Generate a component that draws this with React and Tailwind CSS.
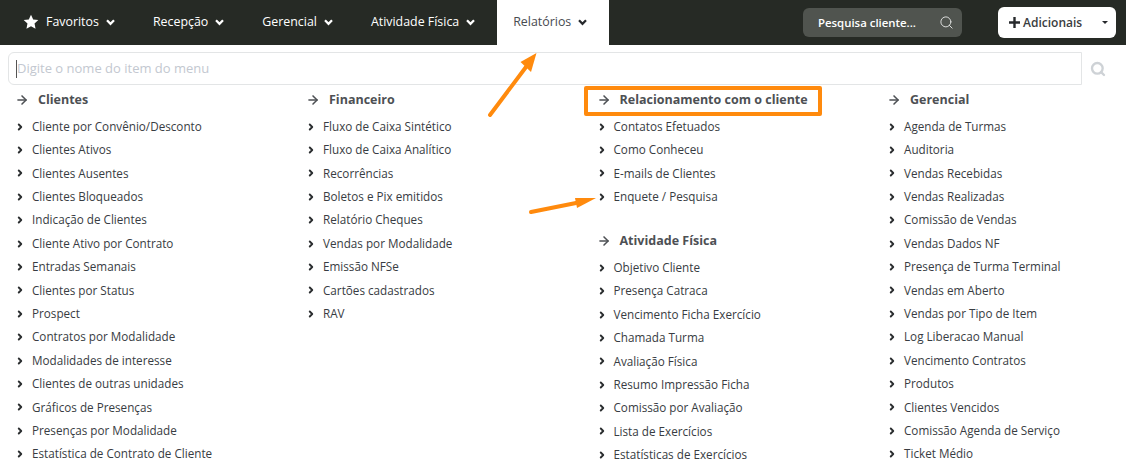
import { ChevronRight, ArrowRight, Search } from "lucide-react";

const font = { fontFamily: '"Open Sans", sans-serif' };

const columns = [
  [
    {
      title: "Clientes",
      items: [
        "Cliente por Convênio/Desconto",
        "Clientes Ativos",
        "Clientes Ausentes",
        "Clientes Bloqueados",
        "Indicação de Clientes",
        "Cliente Ativo por Contrato",
        "Entradas Semanais",
        "Clientes por Status",
        "Prospect",
        "Contratos por Modalidade",
        "Modalidades de interesse",
        "Clientes de outras unidades",
        "Gráficos de Presenças",
        "Presenças por Modalidade",
        "Estatística de Contrato de Cliente",
      ],
    },
  ],
  [
    {
      title: "Financeiro",
      items: [
        "Fluxo de Caixa Sintético",
        "Fluxo de Caixa Analítico",
        "Recorrências",
        "Boletos e Pix emitidos",
        "Relatório Cheques",
        "Vendas por Modalidade",
        "Emissão NFSe",
        "Cartões cadastrados",
        "RAV",
      ],
    },
  ],
  [
    {
      title: "Relacionamento com o cliente",
      boxed: true,
      items: ["Contatos Efetuados", "Como Conheceu", "E-mails de Clientes", "Enquete / Pesquisa"],
    },
    {
      title: "Atividade Física",
      items: [
        "Objetivo Cliente",
        "Presença Catraca",
        "Vencimento Ficha Exercício",
        "Chamada Turma",
        "Avaliação Física",
        "Resumo Impressão Ficha",
        "Comissão por Avaliação",
        "Lista de Exercícios",
        "Estatísticas de Exercícios",
      ],
    },
  ],
  [
    {
      title: "Gerencial",
      items: [
        "Agenda de Turmas",
        "Auditoria",
        "Vendas Recebidas",
        "Vendas Realizadas",
        "Comissão de Vendas",
        "Vendas Dados NF",
        "Presença de Turma Terminal",
        "Vendas em Aberto",
        "Vendas por Tipo de Item",
        "Log Liberacao Manual",
        "Vencimento Contratos",
        "Produtos",
        "Clientes Vencidos",
        "Comissão Agenda de Serviço",
        "Ticket Médio",
      ],
    },
  ],
];

function Caret({ className }) {
  return (
    <svg viewBox="0 0 10 8" className={className} fill="none" stroke="currentColor" strokeWidth="2.6">
      <path d="M1 1.5 5 5.5 9 1.5" />
    </svg>
  );
}

function NavItem({ label, star }) {
  return (
    <div className="flex items-center text-[12.4px] text-white">
      {star && (
        <svg viewBox="0 0 24 24" className="w-[16px] h-[16px] -ml-[1px] mr-[7px] fill-white">
          <path d="M12 1l3.3 7.2 7.7.9-5.7 5.2 1.5 7.7L12 18.2l-6.8 3.8 1.5-7.7L1 9.1l7.7-.9z" />
        </svg>
      )}
      <span>{label}</span>
      <Caret className="w-[9px] h-[7px] ml-[7px]" />
    </div>
  );
}

function Section({ section }) {
  return (
    <div className="mb-[24.5px]">
      <div className="relative flex items-center h-[16px] mb-[7px] text-[#4d5054]">
        {section.boxed && (
          <div className="absolute left-[-14px] top-[-6px] w-[238px] h-[30px] border-4 border-[#ff8a0d] rounded-[2px]" />
        )}
        <ArrowRight className="w-[14px] h-[14px] -ml-[1px] shrink-0" strokeWidth={2.6} />
        <span className="ml-[9px] text-[12.5px] font-bold whitespace-nowrap">{section.title}</span>
      </div>
      <ul>
        {section.items.map((item) => (
          <li key={item} className="flex items-center h-[23.4px] text-[11.7px] text-[#383c42] whitespace-nowrap">
            <ChevronRight className="w-[10px] h-[10px] -ml-[1px] shrink-0 text-[#2b2e30] mr-[7px]" strokeWidth={4.5} />
            {item}
          </li>
        ))}
      </ul>
    </div>
  );
}

export default function App() {
  return (
    <div className="relative h-[471px] overflow-hidden bg-white" style={font}>
      <nav className="flex items-center h-[45px] pl-[24px] pr-[10px] bg-[#262a25]">
        <div className="flex items-center gap-[38px]">
          <NavItem label="Favoritos" star />
          <NavItem label="Recepção" />
          <NavItem label="Gerencial" />
          <NavItem label="Atividade Física" />
        </div>
        <div className="flex items-center h-full ml-[22px] pl-[16px] pr-[22px] bg-white text-[12.4px] text-[#474b50]">
          Relatórios
          <Caret className="w-[9px] h-[7px] ml-[7px] text-[#26292c]" />
        </div>
        <div className="flex items-center justify-between w-[159px] h-[29px] ml-auto pl-[15px] pr-[8px] rounded-[6px] bg-[#50544f] text-[11.4px] font-semibold text-white">
          <span>Pesquisa cliente...</span>
          <Search className="w-[15px] h-[15px] text-[#e4e5e4]" strokeWidth={1.5} />
        </div>
        <div className="flex items-center w-[118px] h-[31px] ml-[36px] pl-[11px] rounded-[6px] bg-white text-[12px] font-semibold text-[#3a3d40]">
          <svg viewBox="0 0 12 12" className="w-[11px] h-[11px] mr-[3px] fill-[#26292c]">
            <path d="M4.7 0h2.6v4.7H12v2.6H7.3V12H4.7V7.3H0V4.7h4.7z" />
          </svg>
          Adicionais
          <span className="ml-[20px] border-x-[3px] border-t-[3px] border-x-transparent border-t-[#26292c]" />
        </div>
      </nav>

      <div className="flex items-center h-[33px] mt-[7px] mr-[20px] ml-[8px]">
        <div className="flex items-center flex-1 h-full pl-[7px] border border-[#e3e5e6] rounded-l-[6px] text-[13px] text-[#c3c8d0]">
          <span className="w-px h-[18px] bg-[#555]" />
          Digite o nome do item do menu
        </div>
        <Search className="w-[16px] h-[16px] ml-[8px] text-[#ced2d6]" strokeWidth={3.5} />
      </div>

      <div className="grid grid-cols-[291px_290.5px_290.5px_1fr] pl-[16px] pt-[7px]">
        {columns.map((column) => (
          <div key={column[0].title}>
            {column.map((section) => (
              <Section key={section.title} section={section} />
            ))}
          </div>
        ))}
      </div>

      {/* setas laranjas de anotação */}
      <svg className="absolute left-0 top-0 w-[1126px] h-[471px] pointer-events-none" viewBox="0 0 1126 471">
        <path d="M490 115 526 67" stroke="#ff8a0d" strokeWidth="4" strokeLinecap="round" />
        <path d="M536.5 53 520.5 62 531 72z" fill="#ff8a0d" />
        <path d="M531 212 576 203" stroke="#ff8a0d" strokeWidth="4" strokeLinecap="round" />
        <path d="M596 198 575 198 577 208z" fill="#ff8a0d" />
      </svg>
    </div>
  );
}
